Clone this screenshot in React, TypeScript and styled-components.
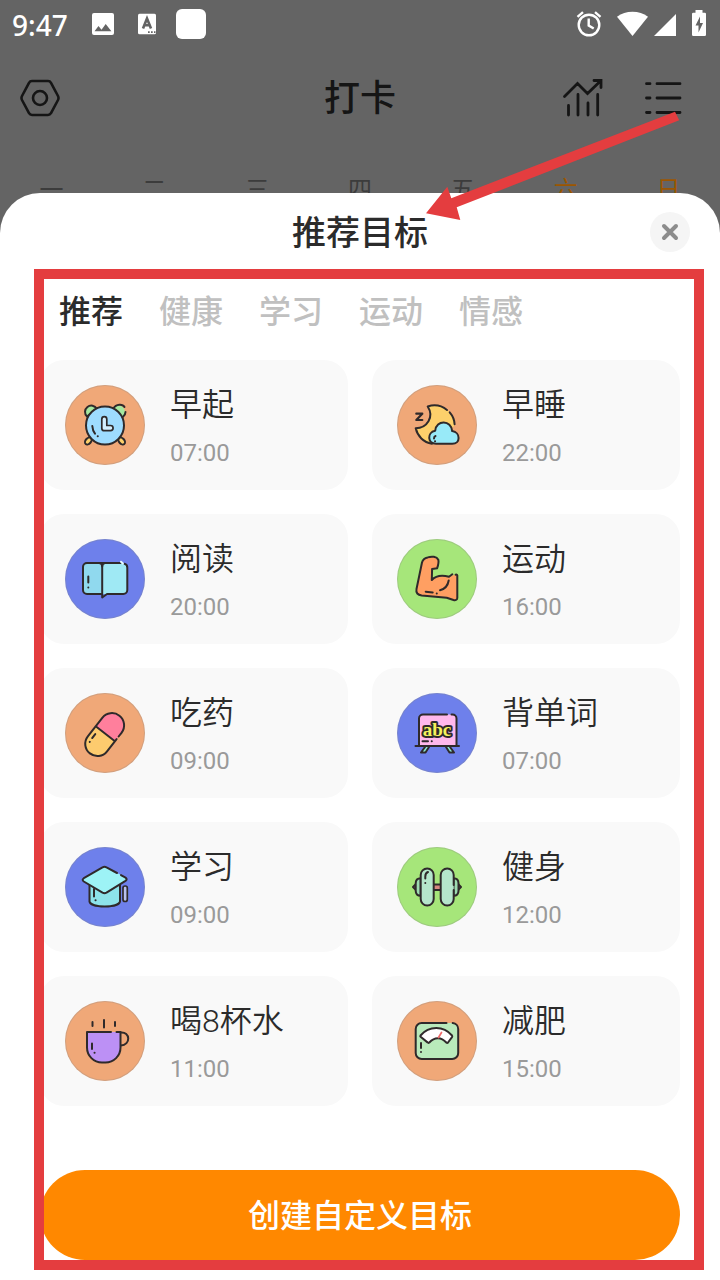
import React, { useState } from "react";
import styled, { createGlobalStyle } from "styled-components";

const INK = "#2f2a2b";
const MARK = "#e43d3f";

const GlobalStyle = createGlobalStyle`
  * { box-sizing: border-box; }
  body {
    margin: 0;
    background: #646464;
    font-family: Roboto, "Noto Sans CJK SC", sans-serif;
  }
  button {
    border: 0;
    padding: 0;
    margin: 0;
    background: none;
    font: inherit;
    color: inherit;
    cursor: pointer;
  }
  svg { display: block; }
`;

const Screen = styled.div`
  position: relative;
  display: flex;
  flex-direction: column;
  min-height: 100vh;
  background: #646464;
`;

const StatusBar = styled.div`
  display: flex;
  align-items: center;
  justify-content: space-between;
  height: 48px;
  padding: 0 13px 0 12px;
  color: #fff;
`;

const StatusLeft = styled.div`
  display: flex;
  align-items: center;
`;

const Clock = styled.span`
  font-family: "Noto Sans", sans-serif;
  font-size: 28px;
  font-weight: 500;
  line-height: 48px;
  margin-right: 22px;
  padding-top: 2px;
`;

const AppBadge = styled.span`
  width: 30px;
  height: 30px;
  margin-left: 20px;
  border-radius: 6px;
  background: #fff;
`;

const TopBar = styled.header`
  display: grid;
  grid-template-columns: 1fr auto 1fr;
  align-items: center;
  height: 100px;
  padding: 0 38px 0 20px;
  color: #151515;
`;

const TopTitle = styled.h1`
  margin: 0 0 0 18px;
  padding-top: 2px;
  font-size: 36px;
  font-weight: 500;
  line-height: 48px;
`;

const TopActions = styled.div`
  display: flex;
  justify-content: flex-end;
  gap: 40px;
`;

const Week = styled.div`
  display: grid;
  grid-template-columns: repeat(7, 1fr);
  height: 80px;
  padding-top: 26px;
  font-size: 24px;
  line-height: 32px;
  text-align: center;
`;

const Day = styled.span<{ $weekend: boolean }>`
  color: ${(p) => (p.$weekend ? "#9b5600" : "#3c3c3c")};
  font-weight: 400;
`;

const Sheet = styled.main`
  position: relative;
  display: flex;
  flex: 1;
  flex-direction: column;
  margin-top: -35px;
  padding: 0 40px 20px;
  border-radius: 40px 40px 0 0;
  background: #fff;
`;

const SheetHeader = styled.div`
  display: grid;
  grid-template-columns: 1fr auto 1fr;
  align-items: center;
  height: 78px;
  margin-right: -10px;
`;

const SheetTitle = styled.h2`
  grid-column: 2;
  margin: 0;
  padding: 2px 10px 0 0;
  color: #2b2b2b;
  font-size: 34px;
  font-weight: 500;
  line-height: 48px;
`;

const CloseButton = styled.button`
  display: grid;
  place-items: center;
  justify-self: end;
  width: 40px;
  height: 40px;
  border-radius: 50%;
  background: #f5f5f5;
`;

const Tabs = styled.div`
  display: flex;
  gap: 36px;
  height: 89px;
  padding: 17px 19px 0;
`;

const Tab = styled.button<{ $active: boolean }>`
  height: 48px;
  color: ${(p) => (p.$active ? "#2b2b2b" : "#c0c0c0")};
  font-size: 32px;
  font-weight: 500;
  line-height: 48px;
`;

const Goals = styled.div`
  display: grid;
  grid-template-columns: 1fr 1fr;
  gap: 24px;
  margin-bottom: 64px;
`;

const GoalCard = styled.button`
  display: flex;
  align-items: center;
  gap: 25px;
  height: 130px;
  padding: 0 25px;
  border-radius: 24px;
  background: #f9f9f9;
  text-align: left;
`;

const Disc = styled.span<{ $color: string }>`
  flex: none;
  width: 80px;
  height: 80px;
  border-radius: 50%;
  background: ${(p) => p.$color};
  box-shadow: inset 0 0 0 1px rgba(140, 140, 140, 0.3);
`;

const GoalText = styled.span`
  display: flex;
  flex-direction: column;
  gap: 10px;
  padding-bottom: 2px;
`;

const GoalName = styled.span`
  color: #2b2b2b;
  font-size: 32px;
  font-weight: 350;
  line-height: 48px;
`;

const GoalTime = styled.span`
  color: #9a9a9a;
  font-size: 24px;
  line-height: 28px;
`;

const CreateButton = styled.button`
  height: 90px;
  margin-top: auto;
  padding-top: 2px;
  border-radius: 45px;
  background: #ff8800;
  color: #fff;
  font-size: 32px;
  font-weight: 500;
  line-height: 48px;
`;

const MarkFrame = styled.div`
  position: absolute;
  top: 269px;
  right: 16px;
  bottom: 10px;
  left: 34px;
  border: 10px solid ${MARK};
  pointer-events: none;
`;

const MarkArrow = styled.svg`
  position: absolute;
  top: 108px;
  right: 38px;
  pointer-events: none;
`;

const Art = ({ children }: { children: React.ReactNode }) => (
  <svg
    width="80"
    height="80"
    viewBox="0 0 80 80"
    fill="none"
    stroke={INK}
    strokeWidth="2"
    strokeLinecap="round"
    strokeLinejoin="round"
    aria-hidden="true"
  >
    {children}
  </svg>
);

const AlarmArt = () => (
  <Art>
    <ellipse cx="23.3" cy="56" rx="2.7" ry="4" transform="rotate(40 23.3 56)" fill="#fdd06b" />
    <ellipse cx="56.7" cy="56" rx="2.7" ry="4" transform="rotate(-40 56.7 56)" fill="#fdd06b" />
    <path d="M22 31.500a6.300 6.300 0 1 1 9.800-7.700z" fill="#a5e8a0" />
    <path d="M58 31.500a6.300 6.300 0 1 0-9.800-7.700z" fill="#a5e8a0" stroke="none" />
    <path d="M48.200 23.800c3-5.300 9.500-5 11.300-1.800M60.500 27c0 2-1 3.500-2.500 4.800" />
    <circle cx="40" cy="40.500" r="19" fill="#9edcff" />
    <path d="M39.300 31.700a2.500 2.500 0 0 1 2.500 2.500v6.300H45.500a2.500 2.500 0 0 1 0 5.200h-6.200a2.500 2.500 0 0 1-2.500-2.500v-9a2.500 2.500 0 0 1 2.500-2.500z" fill="#d3efff" strokeWidth="1.700" />
    <path d="M27.300 41c.2 3 1 5.500 2.700 7.700M32.700 51.300h.1" />
  </Art>
);

const MoonArt = () => (
  <Art>
    <path d="M30.700 21.500C44 17 57 26 57.500 40L44 59H35C26.500 57 20.500 51 18.700 43.300 30 43 37.500 32 30.700 21.500z" fill="#fdd06b" stroke="none" />
    <path d="M30.700 21.500C37.500 19.300 44.500 20.500 50 25M52.700 27.300c3 3.500 4.800 7 4.900 12M30.700 21.500C37.500 32 30 43 18.700 43.300 20.500 51 26.500 57.500 35 58.700" />
    <path d="M39 58.800c-8.500 0-9.300-11.300-.8-13 .8-11.300 16.300-11 17 .3 8.500 1.200 8.500 12.700 0 12.700z" fill="#98eaf8" />
    <path d="M38.500 51c-1 .3-1.500 1.200-1.500 2.500M38 56.300h.1" />
    <path d="M19.300 28.700h6l-6 6.300h6" strokeWidth="2.200" />
  </Art>
);

const BookArt = () => (
  <Art>
    <rect x="18" y="24" width="44" height="31" rx="4" fill="#9fe9f4" stroke="none" />
    <rect x="18" y="24" width="19" height="31" rx="4" fill="#90d9ee" stroke="none" />
    <path d="M56 24H22a4 4 0 0 0-4 4v23a4 4 0 0 0 4 4h15M59.500 24.700a4 4 0 0 1 2.800 4V51a4 4 0 0 1-4 4H42l-4.800 3.500V27.500c0-2 1-3.500 3-3.500" />
    <path d="M37.200 27.500c0-2-1-3.500-3-3.500M23.300 37.500v6M23.300 48.500v.1" />
    <path d="M56 22.700l1.800 1.800" stroke="#e7fbff" />
  </Art>
);

const ArmArt = () => (
  <Art>
    <path d="M30.700 18.400c4-1.300 9-1 10.600 2.400.8 3-.2 5.700-1.200 8.500l-5 .7-.3 11c4.200-4.700 10.700-5 17.200-3.300l8-3v24.500c0 2-2 2.300-3.500 1.700l-6.800-2.700-25-1.700c-4-.5-6-2.700-5.200-6.500l5.500-26.500c.7-3 2.700-4.500 5.700-5.100z" fill="#ff9f62" stroke="none" />
    <path d="M55.300 35.300l-3.300 2.400c-6.500-1.700-13-1.400-17.200 3.300l.3-11 5-.7c1-2.800 2-5.500 1.200-8.500-1.600-3.400-6.600-3.700-10.600-2.400-3 .6-5 2.100-5.700 5.100L19.500 50c-.8 3.800 1.200 6 5.200 6.500l25 2.200 6.800 2.300c1.800.5 3.700 0 3.800-2V36.500c-.2-.9-1-1-1.700-.8M51.700 41.500c-.8 5-4 8.500-8.700 9.800M28.700 52.700l7 .8M39.700 54.500h.1" />
  </Art>
);

const PillArt = () => (
  <Art>
    <g transform="rotate(38 39.700 41.500)">
      <path d="M27.500 40.500V29.800a12.200 12.200 0 0 1 24.400 0v10.700z" fill="#ff7f9c" stroke="none" />
      <path d="M27.500 40.500v12.800a12.200 12.200 0 0 0 24.400 0V40.500z" fill="#fdcb6e" stroke="none" />
      <path d="M51.900 34.500v-4.700a12.200 12.200 0 0 0-24.400 0v23.500a12.200 12.200 0 0 0 24.400 0V37.800M27.500 40.500h24.400M32 47v5M32.500 56.500v.1" />
    </g>
  </Art>
);

const BoardArt = () => (
  <Art>
    <path d="M28 54l-4 5.500h4.500l3.500-5.500M53 54l4 5.500h-4.500L49 54" fill="#8ee9cf" />
    <path d="M22 53V25.500a4 4 0 0 1 4-4h29.500a4 4 0 0 1 4 4V53z" fill="#ffb8ec" stroke="none" />
    <path d="M50 21.500H26a4 4 0 0 0-4 4V53M54.500 21.500h1a4 4 0 0 1 4 4V53M18.500 53h43.500M25.500 48.300h5.500M34.700 48.300h.1" />
    <text
      x="40"
      y="42.500"
      textAnchor="middle"
      fontFamily="Liberation Serif, serif"
      fontWeight="700"
      fontSize="19"
      fill="#f7f15c"
      strokeWidth="4"
      paintOrder="stroke"
    >
      abc
    </text>
  </Art>
);

const CapArt = () => (
  <Art>
    <path d="M24.500 38v16.500c1 6.500 29.500 6.500 30.500 0V38z" fill="#8de3ea" />
    <path d="M37.500 20.300q2-1 4 0l19 10.300q2.300 1.700 0 3.300l-19 11.800q-2 1-4 0l-18.700-11.200q-2.300-1.700 0-3.300z" fill="#9df3f6" stroke="none" />
    <path d="M52 26l-10.500-5.700q-2-1-4 0l-18.700 10.900q-2.300 1.600 0 3.300l18.700 11.200q2 1 4 0l19-11.800q2.300-1.600 0-3.300l-4.500-2.500" />
    <rect x="58" y="39" width="4.300" height="15.500" rx="2" fill="#b8c0ee" strokeWidth="1.700" />
    <path d="M29 42v7.500M30.500 53.300h.1" />
  </Art>
);

const DumbbellArt = () => (
  <Art>
    <path d="M19 37l-3 3 3 3zM61 37l3 3-3 3z" fill="#c88078" />
    <path d="M36 37.500h8v5.500h-8z" fill="#d88880" />
    <path d="M23.700 31.300c-3.400 0-5 2-5 5v7.400c0 3 1.600 5 5 5zM56.500 31.300c3.400 0 5 2 5 5v7.400c0 3-1.600 5-5 5z" fill="#9ddbb1" />
    <rect x="23.700" y="21.500" width="13" height="37" rx="6.500" fill="#b5e6cc" />
    <rect x="43.700" y="21.500" width="13" height="37" rx="6.500" fill="#b5e6cc" stroke="none" />
    <path d="M56.700 38V28a6.500 6.500 0 0 0-13 0v24a6.500 6.500 0 0 0 13 0V43M31 25c-2 .8-2.700 2.300-2.700 4.500v2M28.300 36v.1" />
  </Art>
);

const CupArt = () => (
  <Art>
    <path d="M55.500 31.500c10-1 10.500 12.500.3 13" />
    <path d="M22 31h33.500v15.500a15 15 0 0 1-15 15h-3.500a15 15 0 0 1-15-15z" fill="#bc90f5" stroke="none" />
    <path d="M46 31H22v15.500a15 15 0 0 0 15 15h3.500a15 15 0 0 0 15-15V31h-4M27.500 21v4M39 19v7.500M50 21v4M27 42.500v5.500M29.500 51.700h.1" />
  </Art>
);

const ScaleArt = () => (
  <Art>
    <rect x="18.700" y="22" width="42.500" height="36" rx="6" fill="#b9eabb" stroke="none" />
    <path d="M49.500 22H24.700a6 6 0 0 0-6 6v24a6 6 0 0 0 6 6h30.500a6 6 0 0 0 6-6V28a6 6 0 0 0-5.500-6" />
    <path d="M23.500 34.500c8.500-10 23-10 31.500 0 .5.700.4 1 0 1.600l-4 5.400c-.5.600-1.100.6-1.700 0-5-5.500-11.500-6-17 0-.6.500-1.200.5-1.800-.1l-6.900-5.600c-.5-.5-.5-.8-.1-1.300z" fill="#fff" />
    <path d="M41.500 36.500l3-5" stroke="#ef6b6b" strokeWidth="1.700" />
    <path d="M24 42v5M24 51v.1" />
  </Art>
);

const ORANGE = "#f0a878";
const BLUE = "#6e80eb";
const GREEN = "#a6e67a";

const goals = [
  { name: "早起", time: "07:00", color: ORANGE, Icon: AlarmArt },
  { name: "早睡", time: "22:00", color: ORANGE, Icon: MoonArt },
  { name: "阅读", time: "20:00", color: BLUE, Icon: BookArt },
  { name: "运动", time: "16:00", color: GREEN, Icon: ArmArt },
  { name: "吃药", time: "09:00", color: ORANGE, Icon: PillArt },
  { name: "背单词", time: "07:00", color: BLUE, Icon: BoardArt },
  { name: "学习", time: "09:00", color: BLUE, Icon: CapArt },
  { name: "健身", time: "12:00", color: GREEN, Icon: DumbbellArt },
  { name: "喝8杯水", time: "11:00", color: ORANGE, Icon: CupArt },
  { name: "减肥", time: "15:00", color: ORANGE, Icon: ScaleArt },
];

const tabs = ["推荐", "健康", "学习", "运动", "情感"];
const days = ["一", "二", "三", "四", "五", "六", "日"];

const NoticeIcons = () => (
  <svg width="66" height="48" viewBox="90 0 66 48" aria-hidden="true">
    <rect x="92" y="13" width="22" height="22" rx="2" fill="#fff" />
    <path d="M94.500 31.300l4-5.300 3 3.700 4.200-5.700 5.700 7.300z" fill="#646464" />
    <rect x="138" y="13.700" width="18" height="20.500" rx="1.500" fill="#fff" />
    <path d="M143 28.500l4-10 4 10M144.500 25.300h5" fill="none" stroke="#646464" strokeWidth="2.600" />
    <path d="M148 31.300h1.700v1.700h-1.700zM151 31.300h1.700v1.700H151zM154 31.300h1.500v1.700H154z" fill="#646464" />
  </svg>
);

const SystemIcons = () => (
  <svg width="131" height="48" viewBox="576 0 131 48" fill="#fff" aria-hidden="true">
    <g fill="none" stroke="#fff" strokeWidth="2.400">
      <circle cx="589" cy="25" r="10.300" />
      <path d="M577.500 16.800l5.500-4.600M600.500 16.800l-5.500-4.600M588.700 18.500v7l5 3" />
    </g>
    <path d="M632.500 36L617 16.800c4.500-3.300 9.700-5 15.500-5s11 1.700 15.500 5z" />
    <path d="M654 36l22-22v22z" />
    <path d="M695.500 10h7v2.700h2.300a1.300 1.300 0 0 1 1.200 1.300v20.700a1.300 1.300 0 0 1-1.300 1.300h-11.400a1.300 1.300 0 0 1-1.300-1.300V14a1.300 1.300 0 0 1 1.300-1.300h2.200z" />
    <path d="M700 16.500l-4.500 9h3v7l4.500-9.500h-3z" fill="#646464" />
  </svg>
);

const SettingsIcon = () => (
  <svg width="40" height="40" viewBox="0 0 40 40" fill="none" stroke="currentColor" strokeWidth="2.600" strokeLinejoin="round" aria-hidden="true">
    <path d="M12 3h16q2 0 3 1.800L38 18q1 2 0 4l-7 13.200Q30 37 28 37H12q-2 0-3-1.800L2 22q-1-2 0-4L9 4.800Q10 3 12 3z" />
    <circle cx="20" cy="20" r="7" />
  </svg>
);

const StatsIcon = () => (
  <svg width="42" height="40" viewBox="562 78 42 40" fill="none" stroke="currentColor" strokeWidth="2.800" strokeLinecap="round" aria-hidden="true">
    <path d="M564.500 96.500l13-13 10 10 13-12.500M594 80.500h7v7M568.500 105.500v9.500M578 94.500V115M588 103v12M597.700 94.500V115" />
  </svg>
);

const ListIcon = () => (
  <svg width="38" height="40" viewBox="644 78 38 40" fill="none" stroke="currentColor" strokeWidth="2.800" strokeLinecap="round" aria-hidden="true">
    <path d="M646.500 83.700h3.500M657 83.700h23M646.500 98h3.500M657 98h23M646.500 112.500h3.500M657 112.500h23" />
  </svg>
);

const SettingsButton = styled.button`
  display: block;
`;

export default function App() {
  const [active, setActive] = useState("推荐");

  return (
    <>
      <GlobalStyle />
      <Screen>
        <StatusBar>
          <StatusLeft>
            <Clock>9:47</Clock>
            <NoticeIcons />
            <AppBadge />
          </StatusLeft>
          <SystemIcons />
        </StatusBar>
        <TopBar>
          <div>
            <SettingsButton aria-label="设置">
              <SettingsIcon />
            </SettingsButton>
          </div>
          <TopTitle>打卡</TopTitle>
          <TopActions>
            <button aria-label="统计">
              <StatsIcon />
            </button>
            <button aria-label="列表">
              <ListIcon />
            </button>
          </TopActions>
        </TopBar>
        <Week>
          {days.map((day, i) => (
            <Day key={day} $weekend={i > 4}>
              {day}
            </Day>
          ))}
        </Week>
        <Sheet>
          <SheetHeader>
            <SheetTitle>推荐目标</SheetTitle>
            <CloseButton aria-label="关闭">
              <svg width="20" height="20" viewBox="0 0 20 20" stroke="#8c8c8c" strokeWidth="4" strokeLinecap="round" aria-hidden="true">
                <path d="M4 4l12 12M16 4L4 16" />
              </svg>
            </CloseButton>
          </SheetHeader>
          <Tabs role="tablist">
            {tabs.map((tab) => (
              <Tab
                key={tab}
                role="tab"
                aria-selected={tab === active}
                $active={tab === active}
                onClick={() => setActive(tab)}
              >
                {tab}
              </Tab>
            ))}
          </Tabs>
          <Goals>
            {goals.map(({ name, time, color, Icon }) => (
              <GoalCard key={name}>
                <Disc $color={color}>
                  <Icon />
                </Disc>
                <GoalText>
                  <GoalName>{name}</GoalName>
                  <GoalTime>{time}</GoalTime>
                </GoalText>
              </GoalCard>
            ))}
          </Goals>
          <CreateButton>创建自定义目标</CreateButton>
        </Sheet>
        <MarkFrame />
        <MarkArrow width="258" height="116" viewBox="424 108 258 116" fill={MARK} aria-hidden="true">
          <path d="M675 111.700l4.200 8.600-222.500 87 3.600 12.700-34.300-6.700 21.300-26.600 4 11.600z" />
        </MarkArrow>
      </Screen>
    </>
  );
}
